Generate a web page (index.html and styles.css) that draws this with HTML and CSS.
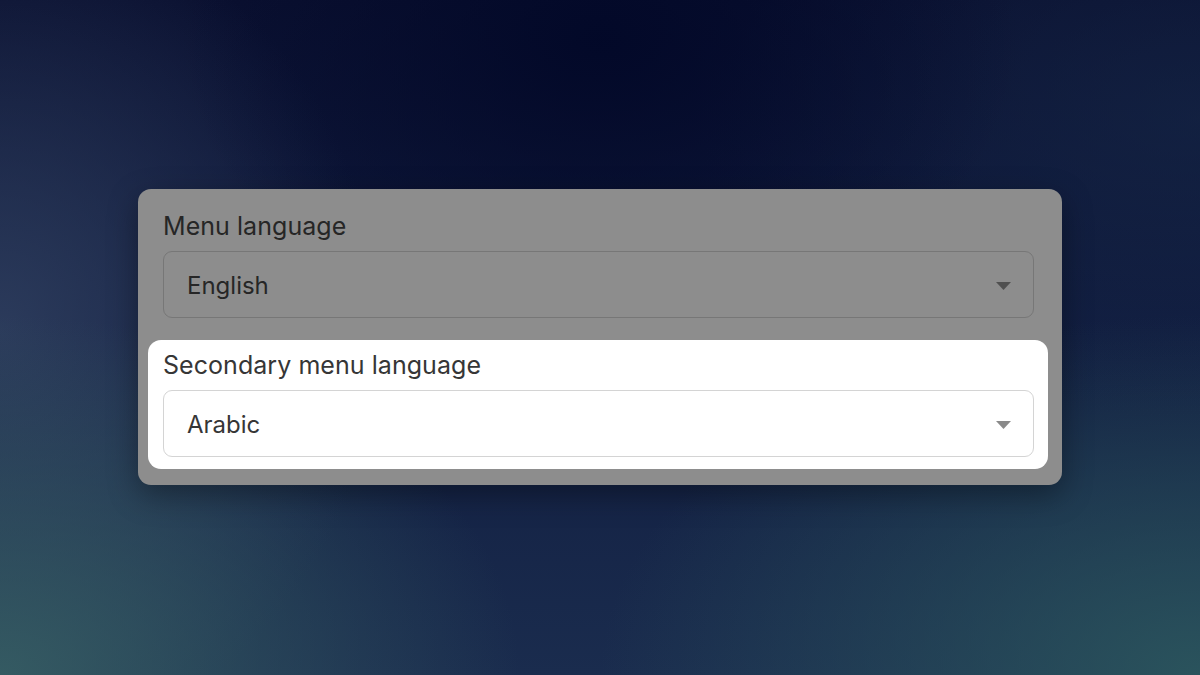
FILE: index.html
```html
<!DOCTYPE html>
<html lang="en">
<head>
<meta charset="utf-8">
<title>Menu language</title>
<link rel="stylesheet" href="styles.css">
</head>
<body>
<main class="stage">
  <section class="card">
    <div class="field field-dim">
      <label class="label">Menu language</label>
      <div class="select">
        <span class="value">English</span>
        <svg class="caret" width="15" height="8" viewBox="0 0 15 8"><path d="M0 0H15L7.5 8Z"/></svg>
      </div>
    </div>
    <div class="field field-lit">
      <label class="label">Secondary menu language</label>
      <div class="select">
        <span class="value">Arabic</span>
        <svg class="caret" width="15" height="8" viewBox="0 0 15 8"><path d="M0 0H15L7.5 8Z"/></svg>
      </div>
    </div>
  </section>
</main>
</body>
</html>
```
FILE: styles.css
```css
* { box-sizing: border-box; }
html, body { margin: 0; height: 100%; }
body {
  font-family: Inter, "Liberation Sans", sans-serif;
  background-color: #0f1a3c;
  background-image:
    radial-gradient(ellipse 420px 300px at 600px 40px, rgba(2,8,40,0.95), rgba(2,8,40,0) 100%),
    radial-gradient(ellipse 520px 360px at 0px 675px, rgba(55,95,100,0.9), rgba(55,95,100,0) 100%),
    radial-gradient(ellipse 600px 360px at 1200px 675px, rgba(45,90,95,0.85), rgba(45,90,95,0) 100%),
    radial-gradient(ellipse 380px 420px at 0px 330px, rgba(48,64,96,0.85), rgba(48,64,96,0) 100%),
    radial-gradient(ellipse 500px 300px at 1200px 120px, rgba(22,40,72,0.6), rgba(22,40,72,0) 100%),
    linear-gradient(180deg, #0a1030 0%, #111d40 50%, #1a2c4e 100%);
}
.stage {
  width: 1200px;
  height: 675px;
  display: flex;
  justify-content: center;
  padding-top: 189px;
}
.card {
  width: 924px;
  height: 296px;
  background: #8d8d8d;
  border-radius: 13px;
  box-shadow: 0 10px 30px rgba(0,0,0,0.35);
  padding: 10px 14px 16px 10px;
  display: flex;
  flex-direction: column;
  gap: 22px;
}
.field {
  padding: 0 14px 0 15px;
  border-radius: 13px;
}
.field-lit {
  background: #fff;
  padding-bottom: 12px;
}
.label {
  display: block;
  font-size: 25px;
  line-height: 30px;
  letter-spacing: 0.05px;
  padding-top: 10px;
  margin-bottom: 10px;
  color: #363636;
}
.field-dim .label { color: #262626; padding-top: 12px; }
.select {
  height: 67px;
  border: 1.5px solid #d4d4d4;
  border-radius: 9px;
  display: flex;
  align-items: center;
  justify-content: space-between;
  padding: 2px 22px 0 23px;
}
.field-dim .select { border-color: #777; }
.value {
  font-size: 24px;
  color: #363636;
}
.field-dim .value { color: #262626; }
.caret { fill: #8a8a8a; }
.field-dim .caret { fill: #505050; }
```
